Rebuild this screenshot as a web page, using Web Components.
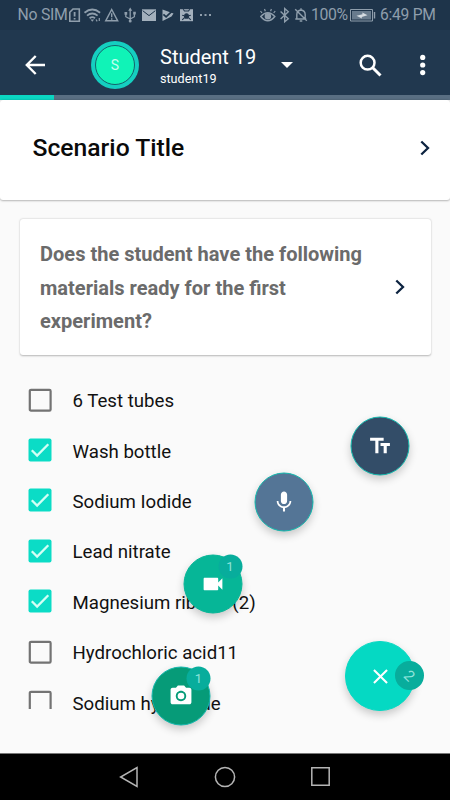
<!DOCTYPE html>
<html lang="en">
<head>
<meta charset="utf-8">
<title>Student 19</title>
<style>
    body {
        margin: 0;
        font-family: Roboto, "Liberation Sans", sans-serif;
    }
</style>
</head>
<body>
<scenario-app></scenario-app>

<script>
const base = `
    :host { display: block; box-sizing: border-box; }
    * { box-sizing: border-box; }
    svg { display: block; flex: none; }
`;

function attach(element, css, html) {
    element.attachShadow({mode: 'open'}).innerHTML = `<style>${base}${css}</style>${html}`;
}

class StatusBar extends HTMLElement {
    connectedCallback() {
        attach(this, `
    :host {
        display: flex;
        justify-content: space-between;
        align-items: center;
        height: 30px;
        padding: 0 15px 0 17.5px;
        background: #1e344a;
        color: #8f9eac;
        font-size: 16px;
        line-height: 32px;
        white-space: nowrap;
    }
    div { display: flex; align-items: center; height: 30px; }
    .sim { width: 51.5px; font-size: 15.8px; letter-spacing: -0.25px; }
    .level { width: 39px; font-size: 15.8px; letter-spacing: -0.4px; }
    .time { width: 55px; font-size: 15.6px; letter-spacing: -0.25px; }
`, `
    <div>
        <span class="sim">No SIM</span>
        <svg width="144" height="18" viewBox="69 6 144 18" fill="none" stroke="#8f9eac" stroke-width="1.6">
            <path d="M73 9h6.3v12.3h-9.5v-9z"/>
            <path d="M74.6 12v4.5M74.6 18v1.6" stroke-width="1.8"/>
            <path d="M84.5 12.7q7.8-6.4 15.6 0M87 15.6q5.3-4.3 10.6 0M89.6 18.2q2.7-2.1 5.4 0" stroke-width="1.8"/>
            <path d="M90.5 19.5h3.6l-1.8 2.2z" fill="#8f9eac" stroke="none"/>
            <path d="M96 19.5l1.2 1.8M99.3 18v3" stroke-width="1.2"/>
            <path d="M111.7 9.5l6 11.3h-12z" stroke-width="1.4"/>
            <path d="M111.7 13.3v4M111.7 18.3v1.4" stroke-width="1.4"/>
            <path d="M130.2 9.5v12M125.8 13.5v3.2l4.4 2.4 4.2-2.4v-3" stroke-width="1.3"/>
            <path d="M130.2 7.5l2 3.2h-4zM124.5 12h2.7v2.8h-2.7zM133.2 11.7h2.6v2.8h-2.6z" fill="#8f9eac" stroke="none"/>
            <circle cx="130.2" cy="21" r="1.5" fill="#8f9eac" stroke="none"/>
            <path d="M142 9.3h14v11.7h-14z" fill="#a3b0bc" stroke="none"/>
            <path d="M142.7 10.7l6.3 4.9 6.3-4.9" stroke="#1e344a" stroke-width="1"/>
            <path d="M162.5 9.4l11 4.2-2 3-9 4.5z" fill="#a3b0bc" stroke="none"/>
            <path d="M163.4 14.3l2.7 2.6 6.3-6" stroke="#1e344a" stroke-width="1.7"/>
            <path d="M180 9.2h13v12h-13z" fill="#a3b0bc" stroke="none"/>
            <path d="M183.2 9.2l1.3 1.8h4l1.3-1.8M182.2 19.8l2.6-2.4M190.8 19.8l-2.6-2.4M182.2 15.2l2 .6M190.8 15.2l-2 .6" stroke="#1e344a" stroke-width="1.1"/>
            <path d="M184 16.5q0-3.2 2.5-3.2t2.5 3.2l-.8 2.3h-3.4z" fill="#1e344a" stroke="none"/>
            <path d="M200 15h2M204.5 15h2M209 15h2" stroke-width="1.8"/>
        </svg>
    </div>
    <div>
        <svg width="51" height="18" viewBox="260 6 51 18" fill="none" stroke="#8f9eac" stroke-width="1.5">
            <path d="M260.8 16.5q7-7.3 14 0-7 8.6-14 0z"/>
            <path d="M262 13l-1.5-2M265.3 11.2l-.8-2.2M270.6 11.2l.8-2.2M273.7 13l1.5-2" stroke-width="1.2"/>
            <circle cx="267.9" cy="16.3" r="2.5" fill="#8f9eac"/>
            <path d="M280.6 11.5l7.7 7.3-3.6 3V8.5l3.6 3.2-7.7 7.4" stroke-width="1.4"/>
            <path d="M296.8 18.7v-4.2q.2-4 4.2-4.5 4 .5 4.2 4.5v4.2M295.3 19h11M301 8.3V10M299.7 21h2.6M295.2 9.2l11.6 11.6" stroke-width="1.4"/>
        </svg>
        <span class="level">100%</span>
        <svg width="30" height="18" viewBox="350 6 30 18">
            <path d="M350.5 9.5h22v11.5h-22z" fill="none" stroke="#8f9eac"/>
            <path d="M352 11h19v8.5h-19z" fill="#687b8d"/>
            <path d="M356.5 15.7l6-1.5-.2-1.7 5.2 2.8-5.8 1.6.2 1.6z" fill="#d5dce2"/>
            <path d="M374.5 12v6.5" stroke="#8f9eac" stroke-width="1.4"/>
        </svg>
        <span class="time">6:49 PM</span>
    </div>
`);
    }
}

class StudentAvatar extends HTMLElement {
    connectedCallback() {
        attach(this, `
    :host {
        width: 48px;
        height: 48px;
        padding: 4px;
        border-radius: 50%;
        background: #15cfc0;
    }
    div {
        display: flex;
        align-items: center;
        justify-content: center;
        height: 40px;
        border: 1px solid #14636c;
        border-radius: 50%;
        background: #10f3b7;
        color: #c4fff0;
        font-size: 14px;
    }
`, `<div><slot></slot></div>`);
    }
}

class StudentToolbar extends HTMLElement {
    connectedCallback() {
        attach(this, `
    :host {
        display: grid;
        grid-template-columns: 66px 69px 121px 77.5px 61.5px 1fr;
        align-items: center;
        height: 65px;
        padding: 5px 0 0 25px;
        background: #21384f;
        color: #fff;
    }
    .who { display: flex; flex-direction: column; white-space: nowrap; }
    .name { font-size: 20px; line-height: 26px; }
    .login { font-size: 12.6px; line-height: 17px; }
`, `
    <svg width="20" height="20" viewBox="0 0 20 20" fill="none" stroke="#fff" stroke-width="2.4"><path d="M10.7 1L1.8 10l8.9 9M2 10h18"/></svg>
    <student-avatar>S</student-avatar>
    <div class="who">
        <span class="name"><slot name="name"></slot></span>
        <span class="login"><slot name="login"></slot></span>
    </div>
    <svg width="12" height="6" viewBox="0 0 12 6" fill="#fff"><path d="M0 0h12L6 6z"/></svg>
    <svg width="23" height="23" viewBox="0 0 23 23" fill="none" stroke="#fff"><circle cx="8.6" cy="8.7" r="6.9" stroke-width="2.5"/><path d="M13.5 13.5l8 8" stroke-width="3"/></svg>
    <svg width="6" height="22" viewBox="0 0 6 22" fill="#fff"><circle cx="2.7" cy="3.4" r="2.6"/><circle cx="2.7" cy="11" r="2.6"/><circle cx="2.7" cy="18.6" r="2.6"/></svg>
`);
    }
}

class ProgressLine extends HTMLElement {
    connectedCallback() {
        attach(this, `
    :host { height: 5px; background: #596e82; }
    div { width: ${this.getAttribute('value')}%; height: 5px; background: #0bd6c2; }
`, `<div></div>`);
    }
}

class NavCard extends HTMLElement {
    connectedCallback() {
        attach(this, `
    :host {
        display: flex;
        align-items: center;
        justify-content: space-between;
        background: #fff;
        border-radius: 3px;
        box-shadow: 0 0.5px 2px rgba(0, 0, 0, 0.28);
    }
`, `
    <slot></slot>
    <svg width="10" height="16" viewBox="0 0 10 16" fill="none" stroke="#0c2340" stroke-width="2.3"><path d="M1.3 1.5L8 8l-6.7 6.5"/></svg>
`);
    }
}

class CheckItem extends HTMLElement {
    connectedCallback() {
        const box = this.hasAttribute('checked')
            ? '<rect x=".5" y=".5" width="23" height="23" rx="2" fill="#0bdcc6"/><path d="M3.8 12.2l5.3 5.3L20.3 6.2" fill="none" stroke="#d3fff5" stroke-width="2.3"/>'
            : '<rect x="1.8" y="1.8" width="20.8" height="20.8" rx="1.2" fill="none" stroke="#737373" stroke-width="2.2"/>';
        attach(this, `
    :host {
        display: flex;
        align-items: center;
        gap: 20.5px;
        height: 50.4px;
        padding-left: 28px;
        color: #111;
        font-size: 18.65px;
        white-space: nowrap;
    }
    :host([partial]) svg { clip-path: inset(0 0 5px 0); }
    span { padding-top: 3px; }
`, `<svg width="24" height="24" viewBox="0 0 24 24">${box}</svg><span><slot></slot></span>`);
    }
}

class CountBadge extends HTMLElement {
    connectedCallback() {
        attach(this, `
    :host {
        display: flex;
        align-items: center;
        justify-content: center;
        width: 24px;
        height: 24px;
        border-radius: 50%;
        background: #08ad9c;
        color: #8ee3da;
        font-size: 13px;
    }
`, `<slot></slot>`);
    }
}

// floating buttons, placed over the list by their centre point
class FabButton extends HTMLElement {
    static icons = {
        text: '<path d="M2.5 4v3h5v12h3V7h5V4h-13zm19 5h-9v3h3v7h3v-7h3V9z"/>',
        mic: '<path d="M12 14c1.66 0 2.99-1.34 2.99-3L15 5c0-1.66-1.34-3-3-3S9 3.34 9 5v6c0 1.66 1.34 3 3 3zm5.3-3c0 3-2.54 5.1-5.3 5.1S6.7 14 6.7 11H5c0 3.41 2.72 6.23 6 6.72V21h2v-3.28c3.28-.48 6-3.3 6-6.72h-1.7z"/>',
        video: '<path d="M17 10.5V7c0-.55-.45-1-1-1H4c-.55 0-1 .45-1 1v10c0 .55.45 1 1 1h12c.55 0 1-.45 1-1v-3.5l4 4v-11l-4 4z"/>',
        camera: '<circle cx="12" cy="12" r="3.2"/><path d="M9 2L7.17 4H4c-1.1 0-2 .9-2 2v12c0 1.1.9 2 2 2h16c1.1 0 2-.9 2-2V6c0-1.1-.9-2-2-2h-3.17L15 2H9zm3 15c-2.76 0-5-2.24-5-5s2.24-5 5-5 5 2.24 5 5-2.24 5-5 5z"/>',
        close: '<path d="M19 6.41L17.59 5 12 10.59 6.41 5 5 6.41 10.59 12 5 17.59 6.41 19 12 13.41 17.59 19 19 17.59 13.41 12z"/>',
    };

    connectedCallback() {
        const size = this.getAttribute('size') || 59;
        const iconSize = this.getAttribute('icon-size') || 25;
        attach(this, `
    :host {
        position: absolute;
        left: ${this.getAttribute('x')}px;
        top: ${this.getAttribute('y')}px;
        display: flex;
        align-items: center;
        justify-content: center;
        width: ${size}px;
        height: ${size}px;
        transform: translate(-50%, -50%);
        border: 1px solid #14b8ad;
        border-radius: 50%;
        background: ${this.getAttribute('color')};
        box-shadow: 0 4px 8px rgba(0, 0, 0, 0.2);
    }
    :host([plain]) { border-color: ${this.getAttribute('color')}; }
    ::slotted(count-badge) { position: absolute; right: -1px; top: -1px; }
    ::slotted(count-badge[turned]) {
        width: 29px;
        height: 29px;
        right: -10px;
        top: 19px;
        transform: rotate(45deg);
        font-size: 15px;
    }
`, `
    <svg width="${iconSize}" height="${iconSize}" viewBox="0 0 24 24" fill="#fff">${FabButton.icons[this.getAttribute('icon')]}</svg>
    <slot></slot>
`);
    }
}

class NavigationBar extends HTMLElement {
    connectedCallback() {
        attach(this, `
    :host {
        display: flex;
        align-items: center;
        justify-content: center;
        gap: 74px;
        height: 47px;
        border-top: 1px solid #777;
        background: #000;
    }
`, `
    <svg width="22" height="22" viewBox="0 0 22 22" fill="none" stroke="#b5b5b5" stroke-width="1.5"><path d="M19 1.5v19L2.6 11z"/></svg>
    <svg width="22" height="22" viewBox="0 0 22 22" fill="none" stroke="#b5b5b5" stroke-width="1.5"><circle cx="11" cy="11" r="9.6"/></svg>
    <svg width="22" height="22" viewBox="0 0 22 22" fill="none" stroke="#b5b5b5" stroke-width="1.5"><path d="M1.8 1.8h17.4v17.4H1.8z"/></svg>
`);
    }
}

class ScenarioApp extends HTMLElement {
    connectedCallback() {
        attach(this, `
    :host {
        position: relative;
        display: flex;
        flex-direction: column;
        width: 450px;
        height: 800px;
        overflow: hidden;
        background: #fafafa;
    }
    .title { height: 100px; padding: 0 20px 5px 32.5px; color: #0a0a0a; font-size: 24.7px; font-weight: 500; }
    .question {
        height: 136px;
        margin: 19px 19px 0 20px;
        padding: 0 26px 0 20px;
        color: #6b6b6b;
        font-size: 20.05px;
        font-weight: 700;
        line-height: 33.7px;
    }
    .question span { width: 335px; padding-top: 3px; }
    .list { margin-top: 19.5px; }
    navigation-bar { margin-top: auto; }
`, `
    <status-bar></status-bar>
    <student-toolbar>
        <span slot="name">Student 19</span>
        <span slot="login">student19</span>
    </student-toolbar>
    <progress-line value="12"></progress-line>
    <nav-card class="title">Scenario Title</nav-card>
    <nav-card class="question"><span>Does the student have the following materials ready for the first experiment?</span></nav-card>
    <div class="list">
        <check-item>6 Test tubes</check-item>
        <check-item checked>Wash bottle</check-item>
        <check-item checked>Sodium Iodide</check-item>
        <check-item checked>Lead nitrate</check-item>
        <check-item checked>Magnesium ribbon (2)</check-item>
        <check-item>Hydrochloric acid11</check-item>
        <check-item partial>Sodium hydroxide</check-item>
    </div>
    <navigation-bar></navigation-bar>
    <fab-button x="380" y="445.5" color="#334d68" icon="text"></fab-button>
    <fab-button x="283.5" y="502" color="#547596" icon="mic"></fab-button>
    <fab-button x="212.5" y="583.5" color="#06b697" icon="video" plain><count-badge>1</count-badge></fab-button>
    <fab-button x="181" y="695.5" color="#069b78" icon="camera"><count-badge>1</count-badge></fab-button>
    <fab-button x="380" y="676" size="70" color="#05d9c3" icon="close" plain><count-badge turned>2</count-badge></fab-button>
`);
    }
}

customElements.define('status-bar', StatusBar);
customElements.define('student-avatar', StudentAvatar);
customElements.define('student-toolbar', StudentToolbar);
customElements.define('progress-line', ProgressLine);
customElements.define('nav-card', NavCard);
customElements.define('check-item', CheckItem);
customElements.define('count-badge', CountBadge);
customElements.define('fab-button', FabButton);
customElements.define('navigation-bar', NavigationBar);
customElements.define('scenario-app', ScenarioApp);
</script>
</body>
</html>
